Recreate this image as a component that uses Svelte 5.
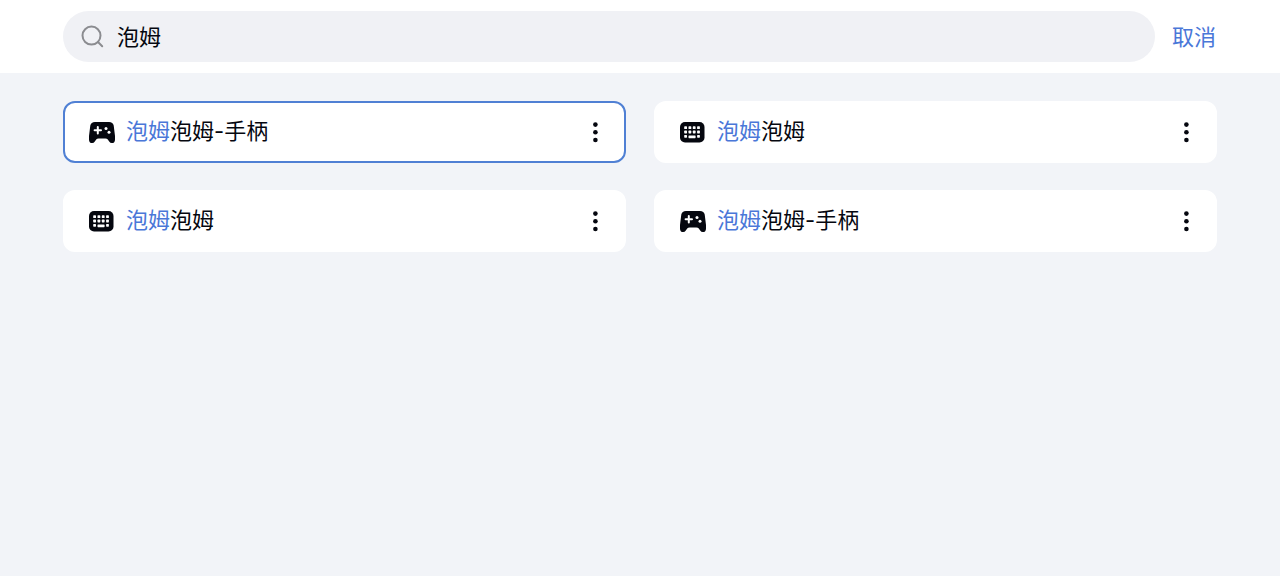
<script>
  let query = $state("泡姆");
  let selected = $state(1);

  const layouts = [
    { id: 1, title: "泡姆泡姆-手柄", device: "gamepad" },
    { id: 2, title: "泡姆泡姆", device: "keyboard" },
    { id: 3, title: "泡姆泡姆", device: "keyboard" },
    { id: 4, title: "泡姆泡姆-手柄", device: "gamepad" },
  ];

  const results = $derived(layouts.filter((l) => l.title.includes(query)));

  // key caps of the small keyboard icon
  const keyCols = [5.2, 9.5, 13.8, 18.1];
  const keyRows = [6.3, 10.6];
</script>

<div class="page">
  <header class="topbar">
    <label class="search">
      <svg class="search-icon" viewBox="0 0 24 24" aria-hidden="true">
        <circle cx="10.5" cy="10.6" r="9" />
        <path d="M17 17 L21.2 21.2" />
      </svg>
      <input type="text" aria-label="搜索" bind:value={query} />
    </label>
    <button class="cancel" type="button" onclick={() => (query = "")}>取消</button>
  </header>

  <main class="results">
    {#each results as item (item.id)}
      <article class="card" class:selected={item.id === selected}>
        <button class="pick" type="button" onclick={() => (selected = item.id)}>
          {#if item.device === "gamepad"}
            <svg class="device" viewBox="0 0 28 24" aria-hidden="true">
              <path
                d="M7 2 H21 Q24.9 2 25.7 5.6 L27 16 V19.4 Q27 23 23.8 23 Q22.2 23 21.2 21.4 L19.8 19.4 Q19 18.4 17.4 18.4 H10.6 Q9 18.4 8.2 19.4 L6.8 21.4 Q5.8 23 4.2 23 Q1 23 1 19.4 V16 L2.3 5.6 Q3.1 2 7 2 Z"
              />
              <path class="cut-line" d="M9.8 7 V13.4 M6.6 10.2 H13" />
              <circle class="cut" cx="18" cy="8.4" r="1.5" />
              <circle class="cut" cx="21" cy="12.2" r="1.5" />
            </svg>
          {:else}
            <svg class="device" viewBox="0 0 28 24" aria-hidden="true">
              <rect x="1" y="2" width="24.5" height="20.4" rx="5" />
              {#each keyRows as y}
                {#each keyCols as x}
                  <rect class="cut" {x} {y} width="2.8" height="2.8" rx="0.6" />
                {/each}
              {/each}
              <rect class="cut" x="5.2" y="14.9" width="2.8" height="2.8" rx="0.6" />
              <rect class="cut" x="9.5" y="15.4" width="7.1" height="2.8" rx="0.6" />
              <rect class="cut" x="18.1" y="14.9" width="2.8" height="2.8" rx="0.6" />
            </svg>
          {/if}
          <span class="title"><mark>{query}</mark>{item.title.replace(query, "")}</span>
        </button>
        <button class="more" type="button" aria-label="更多">
          <svg viewBox="0 0 24 24" aria-hidden="true">
            <circle cx="12.4" cy="4.6" r="2.3" />
            <circle cx="12.4" cy="12.3" r="2.3" />
            <circle cx="12.4" cy="20" r="2.3" />
          </svg>
        </button>
      </article>
    {/each}
  </main>
</div>

<style>
  :global(body) {
    margin: 0;
    background: #f2f4f8;
  }
  .page {
    font-family: Inter, "Noto Sans CJK SC", sans-serif;
    font-size: 22px;
    line-height: 32px;
    color: #05070f;
  }
  button,
  input {
    padding: 0;
    border: 0;
    background: none;
    font: inherit;
    color: inherit;
  }
  button {
    cursor: pointer;
  }
  .topbar {
    display: flex;
    align-items: center;
    gap: 17px;
    padding: 11px 64px 11px 63px;
    background: #fff;
  }
  .search {
    flex: 1;
    display: flex;
    align-items: center;
    gap: 12px;
    height: 51px;
    padding: 0 18px;
    border-radius: 26px;
    background: #f0f1f5;
  }
  .search-icon {
    flex: none;
    width: 24px;
    height: 24px;
    fill: none;
    stroke: #8b8c90;
    stroke-width: 2;
    stroke-linecap: round;
  }
  input {
    flex: 1;
    min-width: 0;
    height: 32px;
    outline: none;
  }
  .cancel {
    color: #4a77d8;
  }
  .results {
    display: grid;
    grid-template-columns: 1fr 1fr;
    gap: 27px 28px;
    padding: 28px 63px;
  }
  .card {
    display: flex;
    align-items: center;
    box-sizing: border-box;
    height: 62px;
    padding: 0 17px 0 23px;
    border: 2px solid #fff;
    border-radius: 12px;
    background: #fff;
  }
  .card.selected {
    border-color: #5080d4;
  }
  .pick {
    flex: 1;
    display: flex;
    align-items: center;
    gap: 10px;
    text-align: left;
  }
  .device {
    flex: none;
    width: 28px;
    height: 24px;
    fill: #05070f;
  }
  .cut {
    fill: #fff;
  }
  .cut-line {
    fill: none;
    stroke: #fff;
    stroke-width: 2;
    stroke-linecap: round;
  }
  .title {
    padding-bottom: 2px;
  }
  mark {
    background: none;
    color: #4a77d8;
  }
  .more {
    display: flex;
  }
  .more svg {
    width: 24px;
    height: 24px;
    fill: #05070f;
  }
</style>
